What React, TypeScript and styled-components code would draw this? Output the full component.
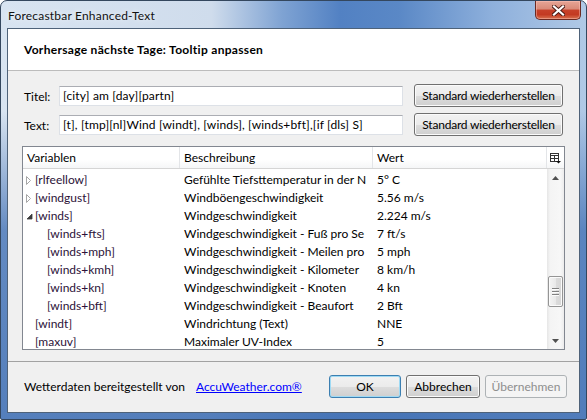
import React from 'react';
import styled, { createGlobalStyle } from 'styled-components';

const UI_FONT = `Lato, "Noto Sans", "DejaVu Sans", sans-serif`;

const GlobalStyle = createGlobalStyle`
  html, body { margin: 0; padding: 0; background: #ffffff; }
  body { font-family: ${UI_FONT}; font-size: 12px; color: #000000; }
  *, *::before, *::after { box-sizing: border-box; }
`;

/* ---------- window chrome ---------- */

const Frame = styled.div`
  width: 587px;
  height: 420px;
  display: flex;
  flex-direction: column;
  padding: 0 6px 6px;
  border: 1px solid #34475e;
  border-radius: 7px 7px 2px 2px;
  background:
    linear-gradient(180deg, rgba(255, 255, 255, 0) 0, rgba(255, 255, 255, 0) 110px,
      rgba(70, 116, 182, 0.8) 230px, rgba(70, 116, 182, 0.9) 100%),
    linear-gradient(90deg, #d8e4f1 0%, #cfdcec 36%, #7fa3d3 48%, #5281c3 58%, #5a88c6 68%,
      #8eb0dc 84%, #b0c9e6 100%);
`;

const TitleBar = styled.div`
  height: 27px;
  display: flex;
  align-items: flex-start;
  justify-content: space-between;
`;

const Caption = styled.div`
  margin: 7px 0 0 1px;
  line-height: 15px;
  font-size: 12px;
  letter-spacing: 0.2px;
  color: #111;
  text-shadow: 0 0 6px rgba(255, 255, 255, 0.9);
`;

const CloseButton = styled.div`
  width: 46px;
  height: 19px;
  margin-right: -1px;
  display: flex;
  align-items: center;
  justify-content: center;
  border: 1px solid #6b2a22;
  border-top: none;
  border-radius: 0 0 5px 5px;
  background: linear-gradient(180deg, #e6a596 0%, #d98a78 45%, #c7412a 50%, #c33a22 75%, #d7714f 100%);
  box-shadow: inset 0 0 0 1px rgba(255, 200, 190, 0.45);
`;

const Client = styled.div`
  flex: 1;
  display: flex;
  flex-direction: column;
  border: 1px solid #4e6279;
  background: #f0f0f0;
`;

/* ---------- banner ---------- */

const Banner = styled.div`
  height: 42px;
  display: flex;
  align-items: center;
  padding: 0 0 1px 16px;
  background: #ffffff;
  border-bottom: 1px solid #bcbcbc;
`;

const Heading = styled.div`
  font-weight: 700;
  font-size: 12px;
  letter-spacing: 0.3px;
  color: #000;
`;

/* ---------- form ---------- */

const Body = styled.div`
  display: flex;
  flex-direction: column;
  padding: 13px 14px 11px;
`;

const FieldRow = styled.div<{ $gap: number }>`
  display: flex;
  align-items: center;
  height: 23px;
  margin-bottom: ${(p) => p.$gap}px;
`;

const FieldLabel = styled.div`
  width: 37px;
  padding-left: 2px;
  padding-top: 1px;
`;

const TextBox = styled.div`
  width: 344px;
  height: 20px;
  margin-top: 1px;
  padding: 0 3px;
  line-height: 18px;
  letter-spacing: 0.16px;
  white-space: nowrap;
  overflow: hidden;
  background: #ffffff;
  border: 1px solid #dde1e7;
  border-top-color: #abadb3;
`;

const PushButton = styled.div<{ $width: number; $variant?: 'default' | 'disabled' }>`
  width: ${(p) => p.$width}px;
  height: 23px;
  display: flex;
  align-items: center;
  justify-content: center;
  border-radius: 3px;
  white-space: nowrap;
  line-height: 14px;
  color: ${(p) => (p.$variant === 'disabled' ? '#8e8e8e' : '#000')};
  border: 1px solid
    ${(p) => (p.$variant === 'default' ? '#3c7fb1' : p.$variant === 'disabled' ? '#adb2b5' : '#707070')};
  background: ${(p) =>
    p.$variant === 'disabled'
      ? '#f4f4f4'
      : 'linear-gradient(180deg, #f2f2f2 0%, #ebebeb 50%, #dddddd 51%, #cfcfcf 100%)'};
  box-shadow: inset 0 0 0 1px
    ${(p) => (p.$variant === 'default' ? '#9fdaf4' : p.$variant === 'disabled' ? '#f4f4f4' : '#fbfbfb')};
`;

const SideButton = styled(PushButton)`
  margin-left: 11px;
  letter-spacing: -0.2px;
`;

/* ---------- list view ---------- */

const ListView = styled.div`
  height: 204px;
  display: flex;
  flex-direction: column;
  background: #ffffff;
  border: 1px solid #828790;
  overflow: hidden;
`;

const COLUMNS = '157px 193px 174px';

const HeaderRow = styled.div`
  height: 22px;
  display: grid;
  grid-template-columns: ${COLUMNS} 17px;
  border-bottom: 1px solid #d5d5d5;
  background: linear-gradient(180deg, #ffffff 0%, #ffffff 60%, #f5f6f7 100%);
`;

const HeaderCell = styled.div`
  padding: 0 4px;
  line-height: 21px;
  border-right: 1px solid #e3e5e8;
  white-space: nowrap;
  overflow: hidden;
`;

const ChooserCell = styled.div`
  display: flex;
  align-items: center;
  justify-content: center;
  padding-top: 1px;
`;

const ListBody = styled.div`
  flex: 1;
  display: flex;
  min-height: 0;
`;

const RowsArea = styled.div`
  flex: 1;
  padding-top: 2px;
  overflow: hidden;
`;

const Row = styled.div`
  display: grid;
  grid-template-columns: ${COLUMNS};
  height: 18px;
  line-height: 18px;
`;

const NameCell = styled.div<{ $level: number }>`
  display: flex;
  align-items: center;
  padding-left: ${(p) => 3 + p.$level * 12}px;
  color: #2c1238;
  white-space: nowrap;
  overflow: hidden;
`;

const ToggleSlot = styled.span`
  width: 9px;
  height: 18px;
  flex: none;
  display: flex;
  align-items: center;
`;

const TextCell = styled.div`
  padding: 0 4px;
  white-space: nowrap;
  overflow: hidden;
`;

/* ---------- scroll bar ---------- */

const ScrollBar = styled.div`
  width: 17px;
  display: flex;
  flex-direction: column;
  background: linear-gradient(90deg, #e6e6e6 0%, #f4f4f4 18%, #f7f7f7 80%, #ececec 100%);
`;

const ArrowButton = styled.div`
  height: 17px;
  flex: none;
  display: flex;
  align-items: center;
  justify-content: center;
`;

const Track = styled.div`
  flex: 1;
  display: flex;
  flex-direction: column;
  align-items: center;
`;

const Thumb = styled.div`
  width: 15px;
  height: 31px;
  display: flex;
  flex-direction: column;
  align-items: center;
  justify-content: center;
  gap: 1px;
  border: 1px solid #959595;
  border-radius: 2px;
  background: linear-gradient(90deg, #f4f4f4 0%, #e9e9e9 50%, #dcdcdc 51%, #d6d6d6 100%);
  box-shadow: inset 0 0 0 1px #fbfbfb;
`;

const GripLine = styled.span`
  width: 7px;
  height: 2px;
  border-top: 1px solid #818181;
  border-bottom: 1px solid #fdfdfd;
`;

/* ---------- footer ---------- */

const Footer = styled.div`
  flex: 1;
  display: flex;
  align-items: center;
  padding: 0 12px 1px 16px;
  border-top: 1px solid #a2a2a2;
`;

const Credit = styled.div`
  width: 172px;
  white-space: nowrap;
`;

const Link = styled.a`
  color: #0000ff;
  text-decoration: underline;
  cursor: pointer;
`;

const Spacer = styled.div`
  flex: 1;
`;

const ButtonGroup = styled.div`
  display: flex;
  gap: 5px;
`;

/* ---------- drawings ---------- */

const CloseGlyph = () => (
  <svg width="13" height="11" viewBox="0 0 13 11">
    <path d="M2 1.5 L11 9.5 M11 1.5 L2 9.5" stroke="#4a1a14" strokeWidth="4" strokeLinecap="square" />
    <path d="M2 1.5 L11 9.5 M11 1.5 L2 9.5" stroke="#ffffff" strokeWidth="2.2" strokeLinecap="square" />
  </svg>
);

const Toggle = ({ state }: { state: 'closed' | 'open' }) =>
  state === 'closed' ? (
    <svg width="6" height="9" viewBox="0 0 6 9">
      <path d="M0.5 0.5 L4.5 4.5 L0.5 8.5 Z" fill="#ffffff" stroke="#a6a6a6" strokeWidth="1" />
    </svg>
  ) : (
    <svg width="7" height="7" viewBox="0 0 7 7">
      <path d="M6 1 L6 6 L1 6 Z" fill="#3b3b3b" stroke="#3b3b3b" strokeWidth="0.8" />
    </svg>
  );

const ChooserIcon = () => (
  <svg width="11" height="11" viewBox="0 0 11 11">
    <rect x="0.5" y="0.5" width="8" height="8" fill="#ffffff" stroke="#333" />
    <path d="M0.5 2.5 H8.5 M4.5 2.5 V8.5 M0.5 5.5 H8.5" stroke="#333" />
    <path d="M6 8 H11 L8.5 10.5 Z" fill="#111" />
  </svg>
);

const Arrow = ({ dir }: { dir: 'up' | 'down' }) => (
  <svg width="7" height="4" viewBox="0 0 7 4">
    <path d={dir === 'up' ? 'M0 4 L3.5 0 L7 4 Z' : 'M0 0 L3.5 4 L7 0 Z'} fill="#505050" />
  </svg>
);

/* ---------- data ---------- */

type Item = {
  name: string;
  desc: string;
  value: string;
  level?: number;
  toggle?: 'closed' | 'open';
};

const items: Item[] = [
  { name: '[rlfeellow]', desc: 'Gefühlte Tiefsttemperatur in der N', value: '5° C', toggle: 'closed' },
  { name: '[windgust]', desc: 'Windböengeschwindigkeit', value: '5.56 m/s', toggle: 'closed' },
  { name: '[winds]', desc: 'Windgeschwindigkeit', value: '2.224 m/s', toggle: 'open' },
  { name: '[winds+fts]', desc: 'Windgeschwindigkeit - Fuß pro Se', value: '7 ft/s', level: 1 },
  { name: '[winds+mph]', desc: 'Windgeschwindigkeit - Meilen pro', value: '5 mph', level: 1 },
  { name: '[winds+kmh]', desc: 'Windgeschwindigkeit - Kilometer', value: '8 km/h', level: 1 },
  { name: '[winds+kn]', desc: 'Windgeschwindigkeit - Knoten', value: '4 kn', level: 1 },
  { name: '[winds+bft]', desc: 'Windgeschwindigkeit - Beaufort', value: '2 Bft', level: 1 },
  { name: '[windt]', desc: 'Windrichtung (Text)', value: 'NNE' },
  { name: '[maxuv]', desc: 'Maximaler UV-Index', value: '5' },
];

const scrollOffset = 90;

export default function App() {
  return (
    <>
      <GlobalStyle />
      <Frame>
        <TitleBar>
          <Caption>Forecastbar Enhanced-Text</Caption>
          <CloseButton>
            <CloseGlyph />
          </CloseButton>
        </TitleBar>
        <Client>
          <Banner>
            <Heading>Vorhersage nächste Tage: Tooltip anpassen</Heading>
          </Banner>
          <Body>
            <FieldRow $gap={6}>
              <FieldLabel>Titel:</FieldLabel>
              <TextBox>[city] am [day][partn]</TextBox>
              <SideButton $width={149}>Standard wiederherstellen</SideButton>
            </FieldRow>
            <FieldRow $gap={10}>
              <FieldLabel>Text:</FieldLabel>
              <TextBox>[t], [tmp][nl]Wind [windt], [winds], [winds+bft],[if [dls] S]</TextBox>
              <SideButton $width={149}>Standard wiederherstellen</SideButton>
            </FieldRow>
            <ListView>
              <HeaderRow>
                <HeaderCell>Variablen</HeaderCell>
                <HeaderCell>Beschreibung</HeaderCell>
                <HeaderCell>Wert</HeaderCell>
                <ChooserCell>
                  <ChooserIcon />
                </ChooserCell>
              </HeaderRow>
              <ListBody>
                <RowsArea>
                  {items.map((it) => (
                    <Row key={it.name}>
                      <NameCell $level={it.level ?? 0}>
                        <ToggleSlot>{it.toggle && <Toggle state={it.toggle} />}</ToggleSlot>
                        {it.name}
                      </NameCell>
                      <TextCell>{it.desc}</TextCell>
                      <TextCell>{it.value}</TextCell>
                    </Row>
                  ))}
                </RowsArea>
                <ScrollBar>
                  <ArrowButton>
                    <Arrow dir="up" />
                  </ArrowButton>
                  <Track>
                    <Thumb style={{ marginTop: scrollOffset }}>
                      <GripLine />
                      <GripLine />
                      <GripLine />
                    </Thumb>
                  </Track>
                  <ArrowButton>
                    <Arrow dir="down" />
                  </ArrowButton>
                </ScrollBar>
              </ListBody>
            </ListView>
          </Body>
          <Footer>
            <Credit>Wetterdaten bereitgestellt von</Credit>
            <Link>AccuWeather.com®</Link>
            <Spacer />
            <ButtonGroup>
              <PushButton $width={72} $variant="default">OK</PushButton>
              <PushButton $width={74}>Abbrechen</PushButton>
              <PushButton $width={82} $variant="disabled">Übernehmen</PushButton>
            </ButtonGroup>
          </Footer>
        </Client>
      </Frame>
    </>
  );
}
